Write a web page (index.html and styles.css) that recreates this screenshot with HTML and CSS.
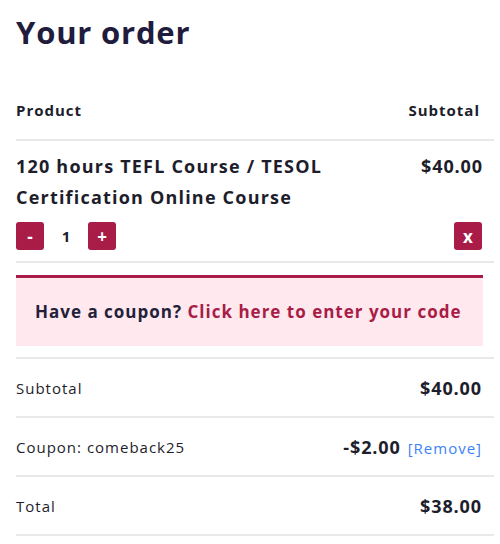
FILE: index.html
```html
<!DOCTYPE html>
<html>
<head>
<meta charset="utf-8">
<link rel="stylesheet" href="styles.css">
</head>
<body>
<div class="page">
  <h1 class="title">Your order</h1>
  <div class="table">
    <div class="row head">
      <span>Product</span>
      <span class="right">Subtotal</span>
    </div>
    <div class="row product">
      <div class="prod-main">
        <div class="prod-name">120 hours TEFL Course / TESOL Certification Online Course</div>
        <div class="price">$40.00</div>
      </div>
      <div class="qty-line">
        <div class="qty">
          <span class="btn">-</span>
          <span class="num">1</span>
          <span class="btn">+</span>
        </div>
        <span class="btn">x</span>
      </div>
    </div>
    <div class="coupon-wrap">
      <div class="coupon">Have a coupon? <a class="coupon-link">Click here to enter your code</a></div>
    </div>
    <div class="row total">
      <span>Subtotal</span>
      <span class="val">$40.00</span>
    </div>
    <div class="row total">
      <span>Coupon: comeback25</span>
      <span><span class="val">-$2.00</span> <a class="remove">[Remove]</a></span>
    </div>
    <div class="row total">
      <span>Total</span>
      <span class="val">$38.00</span>
    </div>
  </div>
</div>
</body>
</html>
```

FILE: styles.css
```css
html, body {
  margin: 0;
  padding: 0;
  background: #fff;
}
body {
  font-family: "Open Sans", Lato, sans-serif;
  color: #1d1d2b;
  letter-spacing: 1px;
}
.page {
  padding: 10px 6px 0 16px;
}
.title {
  margin: 0 0 46px;
  font-size: 31px;
  line-height: 44px;
  font-weight: 700;
  color: #1f1c3d;
  letter-spacing: 0.8px;
}
.table {
  display: flex;
  flex-direction: column;
}
.row {
  border-bottom: 2px solid #e9e9e9;
}
.head {
  display: flex;
  justify-content: space-between;
  font-weight: 700;
  font-size: 15px;
  line-height: 20px;
  padding: 0 14px 19px 0;
}
.product {
  padding: 10px 12px 11px 0;
}
.prod-main {
  display: flex;
  justify-content: space-between;
  gap: 30px;
}
.prod-name {
  font-size: 18px;
  font-weight: 700;
  line-height: 31px;
  max-width: 340px;
  letter-spacing: 1.2px;
}
.price {
  font-size: 18px;
  font-weight: 700;
  line-height: 31px;
  letter-spacing: 0.9px;
  margin-right: -1px;
}
.qty-line {
  display: flex;
  justify-content: space-between;
  align-items: center;
  margin-top: 9px;
}
.qty {
  display: flex;
  align-items: center;
  gap: 14px;
}
.num {
  font-weight: 700;
  font-size: 15px;
  width: 16px;
  text-align: center;
  letter-spacing: 0;
}
.btn {
  width: 28px;
  height: 28px;
  border-radius: 3px;
  background: #a91c47;
  color: #fff;
  font-weight: 700;
  font-size: 17px;
  letter-spacing: 0;
  display: flex;
  align-items: center;
  justify-content: center;
}
.coupon-wrap {
  padding: 12px 11px 11px 0;
  border-bottom: 2px solid #e9e9e9;
}
.coupon {
  background: #ffe9ee;
  border-top: 3px solid #a91c47;
  padding: 22px 19px 23px;
  font-size: 17px;
  line-height: 23px;
  font-weight: 700;
  color: #22213a;
}
.coupon-link {
  color: #a91c47;
}
.total {
  display: flex;
  justify-content: space-between;
  align-items: center;
  height: 57px;
  font-size: 15px;
  padding-right: 12px;
}
.val {
  font-weight: 700;
  font-size: 18px;
  letter-spacing: 0.9px;
}
.remove {
  color: #3b82f6;
  font-size: 15px;
  margin-left: 2px;
}
```
